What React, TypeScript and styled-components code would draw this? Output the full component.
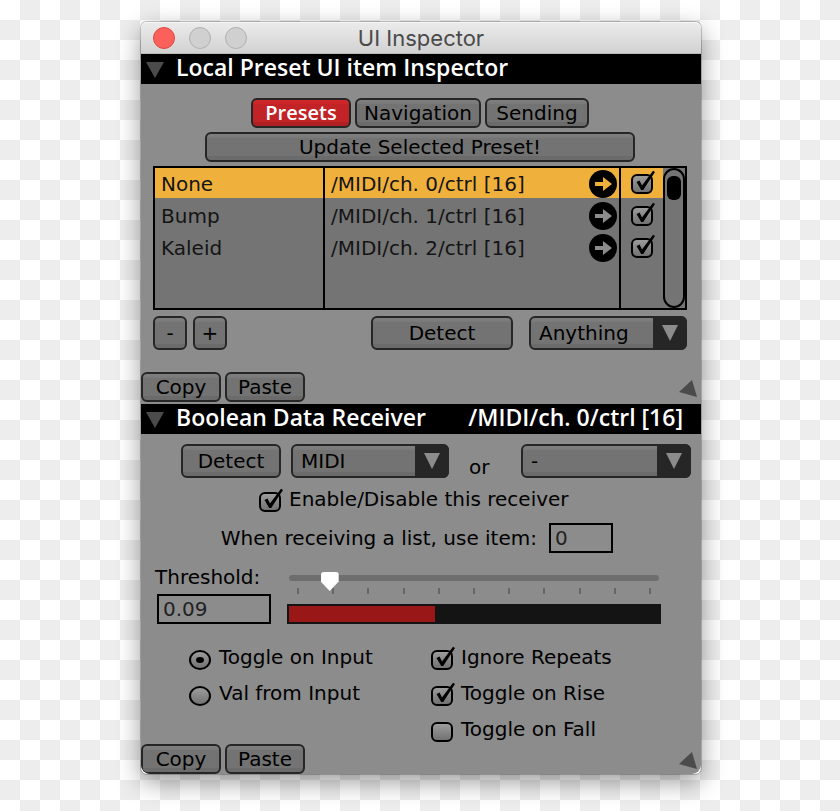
import React, { useId, useState } from 'react';
import styled, { createGlobalStyle, css } from 'styled-components';

const INK = '#262626';
const PANEL = '#8c8c8c';
const FACE = '#747474';
const AMBER = '#f0b13c';

const GlobalStyle = createGlobalStyle`
  *, *::before, *::after { box-sizing: border-box; }
  body {
    margin: 0;
    background: repeating-conic-gradient(#ededed 0 25%, #fff 0 50%) 0 0 / 40px 40px;
  }
  body, button, input, select {
    font-family: "DejaVu Sans", Verdana, sans-serif;
    font-size: 20px;
    color: #000;
  }
`;

const Desktop = styled.div`
  min-height: 100vh;
  padding: 22px 16px 36px;
  display: flex;
  align-items: flex-start;
  justify-content: center;
`;

const Window = styled.main`
  width: 100%;
  max-width: 560px;
  margin-left: 2px;
  border-radius: 6px;
  background: #fff;
  box-shadow: 0 0 0 1px rgba(0, 0, 0, 0.2), 0 8px 24px rgba(0, 0, 0, 0.4);
`;

const TitleBar = styled.header`
  height: 32px;
  padding: 0 12px;
  display: grid;
  grid-template-columns: 1fr auto 1fr;
  align-items: center;
  border-radius: 6px 6px 0 0;
  border-top: 1px solid #f6f6f6;
  border-bottom: 1px solid #b9b9b9;
  background: linear-gradient(#ebebeb, #d2d2d2);
`;

const Lights = styled.div`
  display: flex;
  gap: 14px;
`;

const Light = styled.button<{ $close?: boolean }>`
  width: 22px;
  height: 22px;
  padding: 0;
  border-radius: 50%;
  border: 1px solid ${p => (p.$close ? '#e0443e' : '#b0b0b0')};
  background: ${p => (p.$close ? '#fc605b' : '#d0d0d0')};
`;

const Title = styled.h1`
  margin: 0;
  font: 400 22px/30px Inter, "Liberation Sans", sans-serif;
  color: #4a4a4a;
`;

const Content = styled.div`
  border-radius: 0 0 9px 9px;
  overflow: hidden;
  background: ${PANEL};
`;

const SectionHead = styled.h2`
  margin: 0;
  height: 30px;
  padding: 0 18px 0 5px;
  display: flex;
  align-items: flex-start;
  background: #000;
  color: #fff;
  font: 600 23px/26px "Open Sans", sans-serif;
  white-space: nowrap;
`;

const Fold = styled.button`
  width: 18px;
  height: 16px;
  margin: 8px 12px 0 0;
  padding: 0;
  border: 0;
  background: none;
  svg { display: block; }
`;

const HeadTarget = styled.span`
  margin-left: auto;
`;

const relief = css`
  border: 2px solid ${INK};
  border-radius: 6px;
  background: linear-gradient(#7f7f7f 0, #797979 4px, #737373 4px, #737373 calc(100% - 4px), #6b6b6b calc(100% - 4px));
`;

const Button = styled.button<{ $width: number; $tall?: boolean; $active?: boolean }>`
  ${relief}
  flex: 0 1 auto;
  width: ${p => p.$width}px;
  height: ${p => (p.$tall ? 34 : 30)}px;
  padding: 0;
  line-height: 24px;
  white-space: nowrap;
  ${p => p.$active && css`
    color: #fff;
    font-family: "Open Sans", sans-serif;
    font-weight: 600;
    background: linear-gradient(#d2282b 0, #cb2528 4px, #c22326 4px, #c22326 calc(100% - 4px), #b01f22 calc(100% - 4px));
  `}
`;

const SelectFrame = styled.span<{ $width: number }>`
  position: relative;
  width: ${p => p.$width}px;
  height: 34px;
  select {
    ${relief}
    width: 100%;
    height: 100%;
    padding: 0 36px 0 8px;
    appearance: none;
  }
`;

const SelectArrow = styled.span`
  position: absolute;
  top: 0;
  right: 0;
  width: 34px;
  height: 34px;
  display: grid;
  place-items: center;
  border-radius: 0 6px 6px 0;
  background: ${INK};
  pointer-events: none;
`;

const Centered = styled.div`
  display: flex;
  justify-content: center;
  gap: 4px;
  margin-right: 2px;
`;

const PresetPane = styled.section`
  padding: 14px 0 2px;
  display: flex;
  flex-direction: column;
  gap: 4px;
`;

const ListBox = styled.div`
  height: 144px;
  margin: 0 14px 0 12px;
  display: flex;
  border: 2px solid #000;
  background: ${FACE};
`;

const PresetTable = styled.table`
  flex: 1;
  height: 140px;
  border-collapse: separate;
  border-spacing: 0;
  table-layout: fixed;
  td {
    padding: 0 2px 0 6px;
    border-right: 2px solid #000;
    color: #141414;
    white-space: nowrap;
  }
  td:last-child { border-right: 0; padding: 0 0 0 10px; }
`;

const PresetRow = styled.tr<{ $selected?: boolean }>`
  height: 32px;
  td {
    background: ${p => (p.$selected ? `linear-gradient(${AMBER} 30px, transparent 30px)` : 'none')};
  }
`;

const Source = styled.div`
  display: flex;
  align-items: center;
  justify-content: space-between;
`;

const GoButton = styled.button`
  width: 28px;
  height: 28px;
  padding: 0;
  border: 0;
  border-radius: 50%;
  background: #000;
  svg { display: block; }
`;

const ScrollTrack = styled.div`
  width: 22px;
  padding: 6px 2px;
  border: 2px solid #000;
  border-radius: 11px;
`;

const ScrollThumb = styled.div`
  height: 24px;
  border-radius: 6px;
  background: #000;
`;

const ListActions = styled.div`
  margin: 2px 14px 0 12px;
  display: flex;
  gap: 6px;
`;

const ActionsRight = styled.div`
  margin-left: auto;
  display: flex;
  gap: 16px;
`;

const PaneFooter = styled.footer<{ $gap: number }>`
  height: 30px;
  margin-top: ${p => p.$gap}px;
  padding-right: 4px;
  display: flex;
  gap: 4px;
  svg { margin: 7px 0 0 auto; }
`;

const ReceiverPane = styled.section`
  padding-top: 10px;
`;

const SourceRow = styled.div`
  display: flex;
  padding: 0 10px 0 40px;
  gap: 10px;
`;

const Or = styled.span`
  flex: 1;
  padding: 11px 0 0 10px;
  line-height: 24px;
`;

const CheckLabel = styled.label`
  height: 26px;
  display: flex;
  align-items: flex-end;
  gap: 8px;
  line-height: 26px;
  white-space: nowrap;
`;

const Tick = styled.span`
  position: relative;
  flex: none;
  display: block;
  width: 22px;
  height: 20px;
  input {
    display: block;
    width: 22px;
    height: 20px;
    margin: 0;
    appearance: none;
    border: 2px solid #000;
    border-radius: 6px;
    background: linear-gradient(#9c9c9c, #727272);
  }
  input[type='radio'] { border-radius: 50%; }
  input:not(:checked) + svg { display: none; }
  svg {
    position: absolute;
    left: 0;
    top: -4px;
    pointer-events: none;
  }
`;

const EnableRow = styled.div`
  padding: 7px 0 11px 118px;
`;

const ItemRow = styled.label`
  display: flex;
  align-items: center;
  justify-content: flex-end;
  gap: 12px;
  padding-right: 88px;
  white-space: nowrap;
`;

const NumberBox = styled.input<{ $width: number }>`
  width: ${p => p.$width}px;
  height: 30px;
  padding: 0 4px;
  border: 2px solid #000;
  border-radius: 0;
  background: transparent;
  color: #222;
`;

const ThresholdRow = styled.div`
  padding: 12px 40px 0 14px;
  display: grid;
  grid-template-columns: 116px 1fr;
  column-gap: 16px;
`;

const ThresholdField = styled.label`
  display: flex;
  flex-direction: column;
  align-items: flex-end;
  span { align-self: flex-start; line-height: 24px; margin-bottom: 5px; }
`;

const SliderColumn = styled.div`
  display: flex;
  flex-direction: column;
`;

const Slider = styled.input`
  position: relative;
  z-index: 1;
  height: 26px;
  margin: 0 2px;
  appearance: none;
  background: none;
  &::-webkit-slider-runnable-track {
    height: 6px;
    border-radius: 3px;
    background: #6e6e6e;
  }
  &::-webkit-slider-thumb {
    appearance: none;
    width: 18px;
    height: 19px;
    margin-top: -3px;
    background: #fff;
    border-radius: 3px;
    clip-path: polygon(0 0, 100% 0, 100% 50%, 50% 100%, 0 50%);
  }
`;

const Scale = styled.div`
  display: flex;
  justify-content: space-between;
  margin: -3px 10px 10px;
  i { width: 2px; height: 6px; background: #666; }
`;

const Meter = styled.div`
  height: 20px;
  border: 2px solid #141414;
  background: #141414;
`;

const MeterFill = styled.div`
  height: 100%;
  background: #991717;
`;

const Options = styled.div`
  padding: 20px 0 0 48px;
  display: grid;
  grid-template-columns: 242px 1fr;
`;

const OptionColumn = styled.div`
  display: flex;
  flex-direction: column;
  gap: 10px;
`;

function DownTriangle({ fill, width = 18 }: { fill: string; width?: number }) {
  return (
    <svg width={width} height="16" viewBox="0 0 18 16" preserveAspectRatio="none" aria-hidden="true">
      <path d="M0 0H18L9 16Z" fill={fill} />
    </svg>
  );
}

function Dropdown({ label, width, options }: { label: string; width: number; options: string[] }) {
  return (
    <SelectFrame $width={width}>
      <select aria-label={label}>
        {options.map(o => <option key={o}>{o}</option>)}
      </select>
      <SelectArrow><DownTriangle fill={PANEL} width={16} /></SelectArrow>
    </SelectFrame>
  );
}

function TickBox({ checked = false, label }: { checked?: boolean; label?: string }) {
  return (
    <Tick>
      <input type="checkbox" defaultChecked={checked} aria-label={label} />
      <svg width="26" height="24" viewBox="0 -4 26 24" aria-hidden="true">
        <path d="M5.5 8L8.5 6.5L11 11.5L22 -3.2L24 -2L12.2 16H10.2Z" fill="#000" />
      </svg>
    </Tick>
  );
}

function RadioDot({ name, checked = false }: { name: string; checked?: boolean }) {
  return (
    <Tick>
      <input type="radio" name={name} defaultChecked={checked} />
      <svg width="22" height="24" viewBox="0 -4 22 24" aria-hidden="true">
        <ellipse cx="11" cy="10" rx="4" ry="3" />
      </svg>
    </Tick>
  );
}

function Footer({ gap }: { gap: number }) {
  return (
    <PaneFooter $gap={gap}>
      <Button $width={80}>Copy</Button>
      <Button $width={80}>Paste</Button>
      <svg width="18" height="19" viewBox="0 0 18 19" aria-hidden="true">
        <path d="M13 1L18 18L0 13Z" fill="#4b4b4b" />
      </svg>
    </PaneFooter>
  );
}

const presets = [
  { name: 'None', source: '/MIDI/ch. 0/ctrl [16]' },
  { name: 'Bump', source: '/MIDI/ch. 1/ctrl [16]' },
  { name: 'Kaleid', source: '/MIDI/ch. 2/ctrl [16]' },
];

const ticks = Array.from({ length: 11 }, (_, i) => i);

export default function App() {
  const [threshold, setThreshold] = useState('0.09');
  const mode = useId();
  const level = 39.5;

  return (
    <>
      <GlobalStyle />
      <Desktop>
        <Window>
          <TitleBar>
            <Lights>
              <Light $close aria-label="Close" />
              <Light aria-label="Minimize" />
              <Light aria-label="Zoom" />
            </Lights>
            <Title>UI Inspector</Title>
          </TitleBar>
          <Content>
            <SectionHead>
              <Fold aria-label="Collapse section"><DownTriangle fill="#4b4b4b" /></Fold>
              Local Preset UI item Inspector
            </SectionHead>
            <PresetPane>
              <Centered>
                <Button $width={100} $active>Presets</Button>
                <Button $width={126}>Navigation</Button>
                <Button $width={104}>Sending</Button>
              </Centered>
              <Centered>
                <Button $width={430}>Update Selected Preset!</Button>
              </Centered>
              <ListBox>
                <PresetTable>
                  <colgroup>
                    <col style={{ width: 170 }} />
                    <col />
                    <col style={{ width: 42 }} />
                  </colgroup>
                  <tbody>
                    {presets.map((p, i) => (
                      <PresetRow key={p.name} $selected={i === 0}>
                        <td>{p.name}</td>
                        <td>
                          <Source>
                            {p.source}
                            <GoButton aria-label={`Go to ${p.source}`}>
                              <svg width="28" height="28" viewBox="0 0 28 28" aria-hidden="true">
                                <path d="M6 12H14V7L23 14L14 21V16H6Z" fill={i === 0 ? AMBER : PANEL} />
                              </svg>
                            </GoButton>
                          </Source>
                        </td>
                        <td><TickBox checked label={`Enable ${p.name}`} /></td>
                      </PresetRow>
                    ))}
                    <tr><td /><td /><td /></tr>
                  </tbody>
                </PresetTable>
                <ScrollTrack><ScrollThumb /></ScrollTrack>
              </ListBox>
              <ListActions>
                <Button $width={34} $tall>-</Button>
                <Button $width={34} $tall>+</Button>
                <ActionsRight>
                  <Button $width={142} $tall>Detect</Button>
                  <Dropdown label="Message type" width={158} options={['Anything']} />
                </ActionsRight>
              </ListActions>
              <Footer gap={18} />
            </PresetPane>

            <SectionHead>
              <Fold aria-label="Collapse section"><DownTriangle fill="#4b4b4b" /></Fold>
              Boolean Data Receiver
              <HeadTarget>/MIDI/ch. 0/ctrl [16]</HeadTarget>
            </SectionHead>
            <ReceiverPane>
              <SourceRow>
                <Button $width={100} $tall>Detect</Button>
                <Dropdown label="Protocol" width={158} options={['MIDI']} />
                <Or>or</Or>
                <Dropdown label="Alternative source" width={170} options={['-']} />
              </SourceRow>
              <EnableRow>
                <CheckLabel><TickBox checked />Enable/Disable this receiver</CheckLabel>
              </EnableRow>
              <ItemRow>
                When receiving a list, use item:
                <NumberBox $width={64} defaultValue="0" />
              </ItemRow>
              <ThresholdRow>
                <ThresholdField>
                  <span>Threshold:</span>
                  <NumberBox $width={114} value={threshold} onChange={e => setThreshold(e.target.value)} />
                </ThresholdField>
                <SliderColumn>
                  <Slider
                    type="range"
                    min="0"
                    max="1"
                    step="0.01"
                    aria-label="Threshold"
                    value={threshold}
                    onChange={e => setThreshold(e.target.value)}
                  />
                  <Scale>{ticks.map(t => <i key={t} />)}</Scale>
                  <Meter role="meter" aria-label="Input level" aria-valuemin={0} aria-valuemax={100} aria-valuenow={level}>
                    <MeterFill style={{ width: `${level}%` }} />
                  </Meter>
                </SliderColumn>
              </ThresholdRow>
              <Options>
                <OptionColumn>
                  <CheckLabel><RadioDot name={mode} checked />Toggle on Input</CheckLabel>
                  <CheckLabel><RadioDot name={mode} />Val from Input</CheckLabel>
                </OptionColumn>
                <OptionColumn>
                  <CheckLabel><TickBox checked />Ignore Repeats</CheckLabel>
                  <CheckLabel><TickBox checked />Toggle on Rise</CheckLabel>
                  <CheckLabel><TickBox />Toggle on Fall</CheckLabel>
                </OptionColumn>
              </Options>
              <Footer gap={2} />
            </ReceiverPane>
          </Content>
        </Window>
      </Desktop>
    </>
  );
}
